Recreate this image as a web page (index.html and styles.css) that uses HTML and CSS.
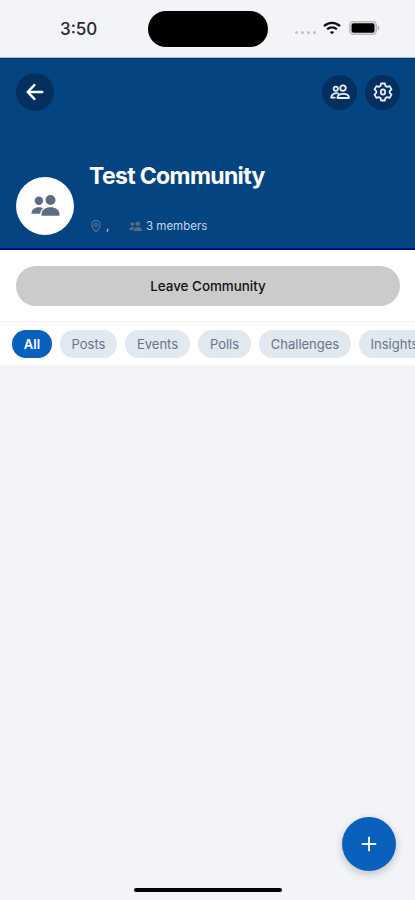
FILE: index.html
```html
<!DOCTYPE html>
<html lang="en">
<head>
<meta charset="utf-8">
<title>Test Community</title>
<link rel="stylesheet" href="styles.css">
</head>
<body>
<svg class="defs" aria-hidden="true">
  <symbol id="people" viewBox="0 0 28 22">
    <circle cx="7.4" cy="5.8" r="4.2"/><circle cx="19" cy="5" r="5"/>
    <path d="M0 18.8C0 14.4 3.2 12.2 7.2 12.2c1.900 0 3.300.4 4.500 1.200-1.900 1.400-2.900 3.100-3.100 5.400z"/>
    <path d="M10 20.700v-1.200c0-4.500 3.900-7.200 9-7.200s9 2.700 9 7.200v1.200z"/>
  </symbol>
</svg>
<div class="screen">
  <div class="status">
    <span class="time">3:50</span>
    <span class="island"></span>
    <div class="signals">
      <div class="dots"><i></i><i></i><i></i><i></i></div>
      <svg class="wifi" width="18" height="14" viewBox="0 0 18 14" fill="none" stroke="#111" stroke-width="2.2"><path d="M1 5.1C5.500.7 12.500.7 17 5.100M4.100 8.300c2.800-2.600 7-2.600 9.800 0"/><path d="M9 13.300 6.800 11.100c1.200-1.200 3.200-1.200 4.400 0z" fill="#111" stroke="none"/></svg>
      <svg class="battery" width="31" height="14" viewBox="0 0 31 14"><rect x=".8" y=".8" width="26.400" height="12.400" rx="3.600" fill="none" stroke="#b5b7ba" stroke-width="1.600"/><rect x="2.500" y="2.300" width="23" height="9.400" rx="2"/><path d="M28.600 4.500c2.400.9 2.400 4.100 0 5z" fill="#b5b7ba"/></svg>
    </div>
  </div>
  <header class="hero">
    <nav class="nav">
      <button class="round back" aria-label="Back"><svg width="18" height="18" viewBox="0 0 18 18"><path d="M16.200 9H2M8.300 2.200 1.700 9l6.600 6.800"/></svg></button>
      <button class="round" aria-label="Members"><svg width="20" height="16" viewBox="0 0 20 16"><circle cx="5.800" cy="4.800" r="2.100"/><circle cx="13" cy="4.100" r="2.800"/><path d="M7.500 14c0-2.700 2.100-4.200 5.700-4.200s5.800 1.500 5.800 4.200zM8 9.300C4.300 8.600 1.500 10.300 1.200 13.700h3.500"/></svg></button>
      <button class="round" aria-label="Settings"><svg width="20" height="20" viewBox="0 0 20 20"><path d="M8.100 1.500h3.800l.6 2.500 1.600.9 2.500-.8 1.900 3.300-1.800 1.800v1.600l1.800 1.800-1.900 3.300-2.500-.8-1.600.9-.6 2.500H8.100L7.500 16l-1.600-.9-2.500.8-1.900-3.300 1.800-1.800V9.200L1.500 7.400l1.900-3.300 2.500.8L7.500 4z"/><ellipse cx="10" cy="10" rx="2.200" ry="2.700"/></svg></button>
    </nav>
    <div class="profile">
      <div class="avatar"><svg width="29" height="22"><use href="#people"/></svg></div>
      <div class="info">
        <h1>Test Community</h1>
        <div class="meta">
          <svg class="pin" width="10" height="13" viewBox="0 0 10 13"><path d="M5 12C2.600 9.200.8 7 .8 4.800a4.200 4.200 0 0 1 8.400 0C9.200 7 7.400 9.200 5 12z"/><circle cx="5" cy="4.800" r="1.500"/></svg>
          <span class="place">,</span>
          <svg class="group" width="13" height="11"><use href="#people"/></svg>
          <span class="count">3 members</span>
        </div>
      </div>
    </div>
  </header>
  <section class="action"><button class="leave">Leave Community</button></section>
  <nav class="tabs">
    <span class="chip all">All</span><span class="chip posts">Posts</span><span class="chip events">Events</span><span class="chip polls">Polls</span><span class="chip challenges">Challenges</span><span class="chip insights">Insights</span>
  </nav>
  <main class="feed"></main>
  <button class="add" aria-label="Create"><svg width="16" height="16" viewBox="0 0 16 16"><path d="M8 .8v14.400M.8 8h14.400"/></svg></button>
  <div class="home"></div>
</div>
</body>
</html>
```
FILE: styles.css
```css
* { box-sizing: border-box; }
body { margin: 0; font-family: Inter, "Liberation Sans", sans-serif; }
button { border: 0; padding: 0; font-family: inherit; }
svg { display: block; flex: none; }
.defs { position: absolute; width: 0; height: 0; }
.screen { position: relative; display: flex; flex-direction: column; width: 100%; height: 900px; overflow: hidden; background: #f2f4f8; }
.status { display: grid; grid-template-columns: 148px 120px 1fr; height: 58px; flex: none; padding-top: 11px; border-bottom: 1px solid #acc2dc; }
.time { padding-left: 60px; font-size: 17px; line-height: 36px; font-weight: 500; color: #28292c; }
.island { height: 36px; border-radius: 18px; background: #000; }
.signals { display: flex; align-items: center; height: 34px; padding-left: 27px; }
.dots { display: flex; gap: 3px; width: 21px; margin: 9px 7px 0 0; }
.dots i { width: 3px; height: 3px; border-radius: 50%; background: #bfc0c4; }
.battery { margin-left: 8px; }
.hero { height: 192px; flex: none; padding: 14px 15px 0 16px; background: #044481; border-bottom: 2px solid #07107c; border-top: 1px solid #06346f; }
.nav { display: flex; align-items: center; gap: 8px; height: 38px; }
.round { display: flex; align-items: center; justify-content: center; width: 35px; height: 35px; border-radius: 50%; background: #04305f; }
.round svg { fill: none; stroke: #e8edf8; stroke-width: 1.8; stroke-linejoin: round; stroke-linecap: round; }
.back { width: 38px; height: 38px; margin-right: auto; }
.back svg { stroke: #fff; stroke-width: 2.5; }
.profile { display: flex; gap: 15px; padding-top: 50px; }
.avatar { display: flex; align-items: center; justify-content: center; width: 58px; height: 58px; margin-top: 16px; border-radius: 50%; background: #fff; }
.avatar svg { fill: #5e6d82; }
h1 { margin: 0; font-size: 23px; line-height: 30px; font-weight: 700; letter-spacing: -.65px; color: #fff; white-space: nowrap; }
.meta { display: flex; align-items: center; height: 16px; margin-top: 27px; font-size: 11.5px; color: #c8d5ec; }
.pin { margin-left: 2px; fill: none; stroke: #58708f; stroke-width: 1.2; }
.place { width: 28px; padding-left: 5px; }
.group { margin-right: 4px; fill: #526b8a; }
.count { position: relative; }
.action { height: 72px; flex: none; padding: 16px 15px 0 16px; background: #fff; border-bottom: 1px solid #edf1f5; }
.leave { display: block; width: 100%; height: 40px; border-radius: 20px; background: #cbcbcb; font-size: 13.4px; font-weight: 500; color: #111; }
.tabs { display: flex; gap: 8px; height: 43px; flex: none; padding: 8px 0 0 12px; background: #fff; overflow: hidden; }
.chip { display: flex; flex: none; align-items: center; justify-content: center; height: 28px; border-radius: 14px; background: #e2e8f0; color: #66758a; font-size: 13px; white-space: nowrap; }
.all { width: 40px; background: #0760bd; color: #fff; font-weight: 600; }
.posts { width: 57px; }
.events { width: 65px; }
.polls { width: 53px; }
.challenges { width: 92px; }
.insights { width: 71px; }
.feed { flex: 1; }
.add { position: absolute; right: 19px; top: 817px; display: flex; align-items: center; justify-content: center; width: 54px; height: 54px; border-radius: 50%; background: #0961bd; box-shadow: 0 3px 8px rgba(0,0,0,.22); }
.add svg { fill: none; stroke: #fff; stroke-width: 1.8; }
.home { width: 148px; height: 4px; flex: none; margin: 0 auto 8px; border-radius: 2px; background: #000; }
```
